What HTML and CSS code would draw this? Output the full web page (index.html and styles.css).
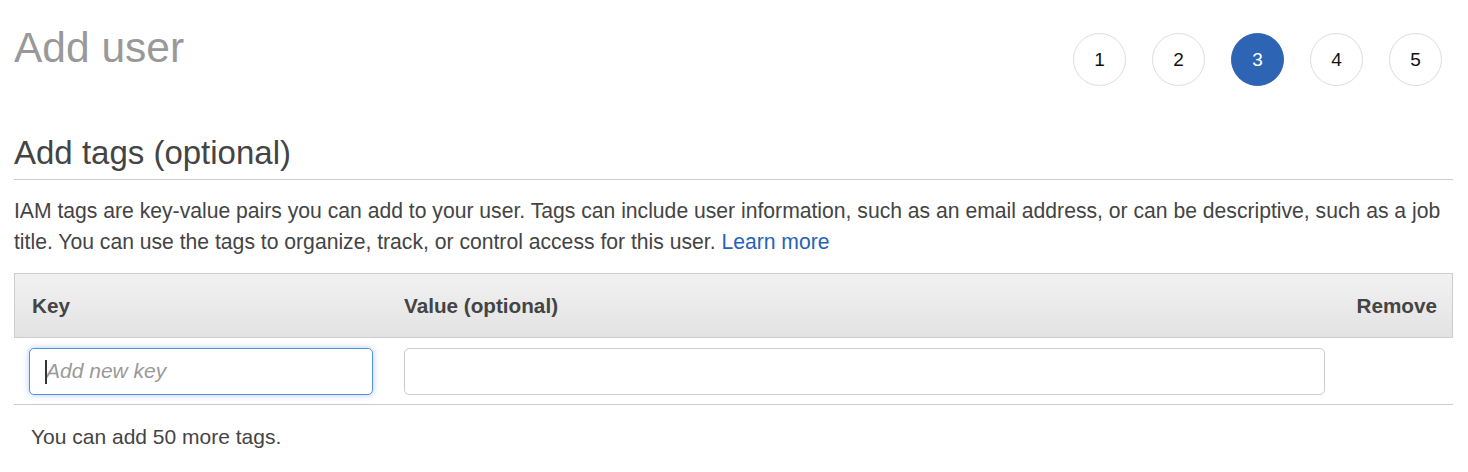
FILE: index.html
```html
<!DOCTYPE html>
<html lang="en">
<head>
<meta charset="utf-8">
<title>Add user</title>
<link rel="stylesheet" href="styles.css">
</head>
<body>
<div class="page">
  <header class="top">
    <h1 class="title">Add user</h1>
    <ol class="steps">
      <li class="step">1</li>
      <li class="step">2</li>
      <li class="step active">3</li>
      <li class="step">4</li>
      <li class="step">5</li>
    </ol>
  </header>

  <h2 class="section-title">Add tags (optional)</h2>
  <p class="intro">IAM tags are key-value pairs you can add to your user. Tags can include user information, such as an email address, or can be descriptive, such as a job title. You can use the tags to organize, track, or control access for this user. <a class="link" href="#">Learn more</a></p>

  <div class="tags">
    <div class="row head">
      <div class="cell key-head">Key</div>
      <div class="cell">Value (optional)</div>
      <div class="cell remove-head">Remove</div>
    </div>
    <div class="row body">
      <div class="cell">
        <div class="field focused">
          <input class="input" type="text" placeholder="Add new key">
          <span class="caret"></span>
        </div>
      </div>
      <div class="cell">
        <div class="field">
          <input class="input" type="text">
        </div>
      </div>
      <div class="cell"></div>
    </div>
  </div>

  <p class="note">You can add 50 more tags.</p>
</div>
</body>
</html>
```

FILE: styles.css
```css
* { box-sizing: border-box; }

html, body {
  margin: 0;
  padding: 0;
  background: #ffffff;
}

body {
  font-family: "Liberation Sans", Arial, Helvetica, sans-serif;
  font-size: 21px;
  color: #444444;
}

.page {
  padding: 0 15px 0 14px;
}

.top {
  display: flex;
  justify-content: space-between;
  align-items: flex-start;
  padding-top: 27px;
}

.title {
  margin: 0;
  font-size: 42.5px;
  line-height: 1;
  font-weight: 400;
  color: #999999;
}

.steps {
  display: flex;
  gap: 26px;
  list-style: none;
  margin: 6px 11px 0 0;
  padding: 0;
}

.step {
  width: 53px;
  height: 53px;
  border: 1px solid #dddddd;
  border-radius: 50%;
  display: flex;
  align-items: center;
  justify-content: center;
  font-size: 19px;
  color: #111111;
  background: #ffffff;
}

.step.active {
  background: #2e64b4;
  border-color: #2e64b4;
  color: #ffffff;
}

.section-title {
  margin: 50px 0 0 0;
  padding-bottom: 10px;
  font-size: 33px;
  line-height: 1;
  font-weight: 400;
  color: #444444;
  border-bottom: 1px solid #cccccc;
}

.intro {
  margin: 15px 0 0 0;
  font-size: 21.15px;
  line-height: 31px;
}

.link {
  color: #2563b6;
  text-decoration: none;
}

.tags {
  margin-top: 16px;
}

.row {
  display: grid;
  grid-template-columns: 374px 951px 1fr;
  align-items: center;
}

.row.head {
  height: 65px;
  border: 1px solid #cccccc;
  background: linear-gradient(#f1f1f1, #e3e3e3);
  font-weight: 700;
  font-size: 20.7px;
  color: #444444;
}

.row.head .cell {
  padding-left: 15px;
}

.row.head .key-head {
  padding-left: 17px;
}

.row.head .remove-head {
  text-align: right;
  padding-right: 15px;
}

.row.body {
  height: 67px;
  border-bottom: 1px solid #cccccc;
  padding: 0 1px;
}

.row.body .cell {
  padding: 0 16px 0 14px;
}

.row.body .cell + .cell {
  padding: 0 15px;
}

.field {
  position: relative;
}

.input {
  display: block;
  width: 100%;
  height: 47px;
  padding: 0 16px;
  border: 1px solid #cccccc;
  border-radius: 5px;
  font-family: "Liberation Sans", Arial, Helvetica, sans-serif;
  font-size: 21px;
  color: #444444;
  background: #ffffff;
  outline: none;
}

.input::placeholder {
  color: #999999;
  font-style: italic;
}

.field.focused .input {
  border-color: #5591dd;
  box-shadow: 0 0 6px rgba(82, 140, 230, 0.45);
}

.caret {
  position: absolute;
  left: 16px;
  top: 12px;
  width: 2px;
  height: 24px;
  background: #333333;
}

.note {
  margin: 16px 0 0 17px;
  line-height: 31px;
  color: #444444;
}
```
